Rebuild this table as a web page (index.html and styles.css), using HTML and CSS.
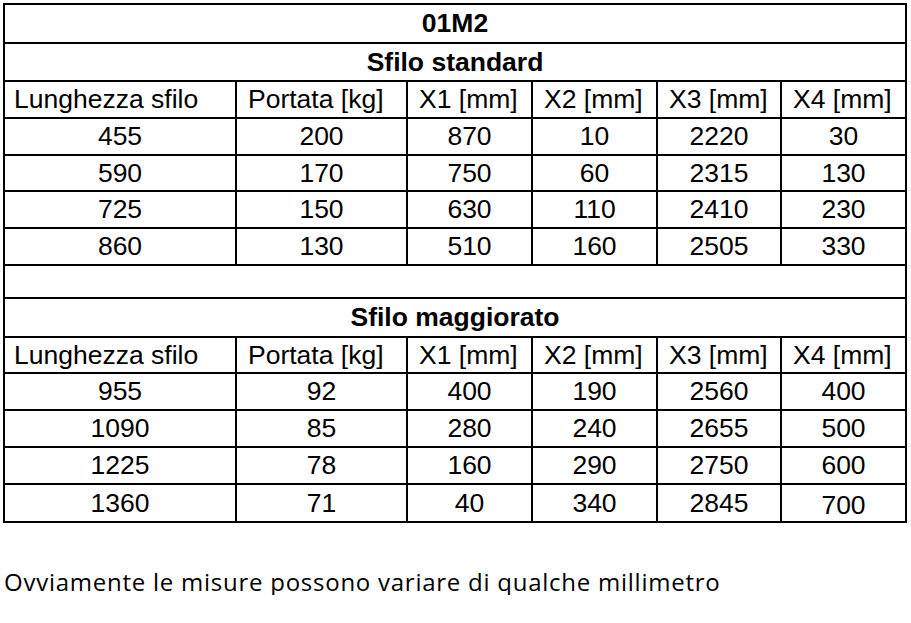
FILE: index.html
```html
<!DOCTYPE html>
<html lang="it">
<head>
<meta charset="utf-8">
<title>01M2</title>
<link rel="stylesheet" href="styles.css">
</head>
<body>
<div class="sheet">
  <div class="cell title">01M2</div>
  <div class="cell title">Sfilo standard</div>
  <div class="cell head first">Lunghezza sfilo</div>
  <div class="cell head">Portata [kg]</div>
  <div class="cell head">X1 [mm]</div>
  <div class="cell head">X2 [mm]</div>
  <div class="cell head">X3 [mm]</div>
  <div class="cell head">X4 [mm]</div>

  <div class="cell">455</div><div class="cell">200</div><div class="cell">870</div><div class="cell">10</div><div class="cell">2220</div><div class="cell">30</div>
  <div class="cell">590</div><div class="cell">170</div><div class="cell">750</div><div class="cell">60</div><div class="cell">2315</div><div class="cell">130</div>
  <div class="cell">725</div><div class="cell">150</div><div class="cell">630</div><div class="cell">110</div><div class="cell">2410</div><div class="cell">230</div>
  <div class="cell">860</div><div class="cell">130</div><div class="cell">510</div><div class="cell">160</div><div class="cell">2505</div><div class="cell">330</div>

  <div class="cell title"></div>
  <div class="cell title">Sfilo maggiorato</div>
  <div class="cell head first">Lunghezza sfilo</div>
  <div class="cell head">Portata [kg]</div>
  <div class="cell head">X1 [mm]</div>
  <div class="cell head">X2 [mm]</div>
  <div class="cell head">X3 [mm]</div>
  <div class="cell head">X4 [mm]</div>

  <div class="cell">955</div><div class="cell">92</div><div class="cell">400</div><div class="cell">190</div><div class="cell">2560</div><div class="cell">400</div>
  <div class="cell">1090</div><div class="cell">85</div><div class="cell">280</div><div class="cell">240</div><div class="cell">2655</div><div class="cell">500</div>
  <div class="cell">1225</div><div class="cell">78</div><div class="cell">160</div><div class="cell">290</div><div class="cell">2750</div><div class="cell">600</div>
  <div class="cell">1360</div><div class="cell">71</div><div class="cell">40</div><div class="cell">340</div><div class="cell">2845</div><div class="cell low">700</div>
</div>
<p class="note">Ovviamente le misure possono variare di qualche millimetro</p>
</body>
</html>
```
FILE: styles.css
```css
html, body {
  margin: 0;
  padding: 0;
  background: #fff;
}

.sheet {
  display: grid;
  grid-template-columns: 230px 169px 123px 123px 122px 123px;
  grid-template-rows: 37px 36px 35px 35px 34px 35px 35px 31px 37px 34px 35px 35px 35px 36px;
  gap: 2px;
  padding: 2px;
  background: #000;
  width: fit-content;
  margin: 3px 0 0 3px;
  font-family: "Liberation Sans", Arial, sans-serif;
  font-size: 26.5px;
  color: #000;
}

.cell {
  background: #fff;
  display: flex;
  align-items: center;
  justify-content: center;
  white-space: nowrap;
  line-height: 1;
}

.title {
  grid-column: 1 / -1;
  font-weight: bold;
}

.head {
  justify-content: flex-start;
  padding-left: 11px;
}

.head.first {
  padding-left: 9px;
}

.low {
  padding-top: 4px;
}

.note {
  margin: 46px 0 0 4px;
  font-family: "Open Sans", "Noto Sans", sans-serif;
  font-size: 24px;
  line-height: 26px;
  letter-spacing: 0.75px;
  color: #000;
}
```
